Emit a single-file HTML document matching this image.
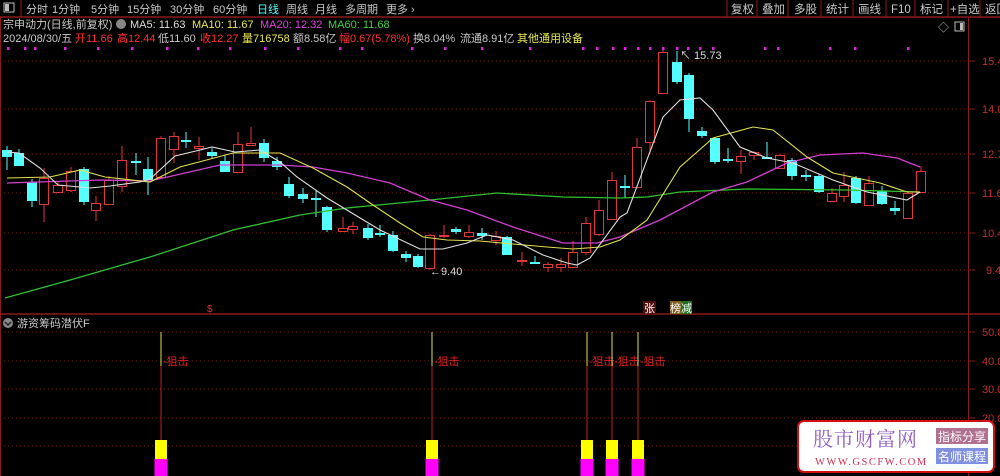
<!DOCTYPE html>
<html><head><meta charset="utf-8"><style>
body{margin:0;background:#000;width:1000px;height:476px;overflow:hidden;font-family:"Liberation Sans","Noto Sans CJK SC",sans-serif;}
svg{position:absolute;left:0;top:0}
.t{font-family:"Liberation Sans","Noto Sans CJK SC",sans-serif;}
</style></head><body>
<svg width="1000" height="476" viewBox="0 0 1000 476" class="t">
<rect x="0" y="0" width="1000" height="17" fill="#000"/>
<line x1="0" y1="17" x2="1000" y2="17" stroke="#8b1a1a" stroke-width="1.5"/>
<rect x="4" y="3" width="10" height="9" fill="none" stroke="#bbb"/><rect x="5" y="4" width="4" height="7" fill="#bbb"/>
<line x1="21" y1="0" x2="21" y2="17" stroke="#8b1a1a"/>
<g font-size="11" fill="#c8c8c8">
<text x="26" y="13">分时</text><text x="52" y="13">1分钟</text><text x="91" y="13">5分钟</text><text x="127" y="13">15分钟</text><text x="170" y="13">30分钟</text><text x="213" y="13">60分钟</text>
<text x="257" y="13" fill="#5ff">日线</text><text x="286" y="13">周线</text><text x="315" y="13">月线</text><text x="345" y="13">多周期</text><text x="386" y="13">更多 ›</text>
</g>
<g stroke="#8b1a1a" fill="none"><line x1="727" y1="0" x2="727" y2="17"/><line x1="757" y1="0" x2="757" y2="17"/><line x1="788" y1="0" x2="788" y2="17"/><line x1="821" y1="0" x2="821" y2="17"/><line x1="853" y1="0" x2="853" y2="17"/><line x1="886" y1="0" x2="886" y2="17"/><line x1="915" y1="0" x2="915" y2="17"/><line x1="948" y1="0" x2="948" y2="17"/><line x1="980" y1="0" x2="980" y2="17"/></g>
<g font-size="11.5" fill="#c8c8c8"><text x="731" y="13">复权</text><text x="762" y="13">叠加</text><text x="794" y="13">多股</text><text x="826" y="13">统计</text><text x="858" y="13">画线</text><text x="891" y="13">F10</text><text x="920" y="13">标记</text><text x="950" y="13">+自选</text><text x="985" y="13">返回</text></g>
<g font-size="11">
<text x="3" y="28" fill="#c8c8c8">宗申动力(日线,前复权)</text>
<circle cx="121" cy="24" r="5" fill="#888"/>
<text x="130" y="28" fill="#ddd">MA5: 11.63</text><text x="192" y="28" fill="#e8e850">MA10: 11.67</text><text x="260" y="28" fill="#e040e0">MA20: 12.32</text><text x="328" y="28" fill="#40d040">MA60: 11.68</text>
<text x="3" y="42" fill="#c8c8c8">2024/08/30/五</text><text x="75" y="42" fill="#ff3030">开11.66</text><text x="117" y="42" fill="#ff3030">高12.44</text><text x="158" y="42" fill="#c8c8c8">低11.60</text><text x="200" y="42" fill="#ff3030">收12.27</text><text x="242" y="42" fill="#e8e850">量716758</text><text x="293" y="42" fill="#c8c8c8">额8.58亿</text><text x="339" y="42" fill="#ff3030">幅0.67(5.78%)</text><text x="413" y="42" fill="#c8c8c8">换8.04%</text><text x="460" y="42" fill="#c8c8c8">流通8.91亿</text><text x="517" y="42" fill="#e8e850">其他通用设备</text>
</g>
<text x="938" y="31" fill="#bbb" font-size="11">◇</text><rect x="955" y="22" width="9" height="9" fill="none" stroke="#bbb"/><rect x="960" y="23" width="3" height="7" fill="#bbb"/>
<line x1="0.5" y1="17" x2="0.5" y2="476" stroke="#8b1a1a"/>
<line x1="968.5" y1="17" x2="968.5" y2="476" stroke="#8b1a1a"/>
<line x1="0" y1="314" x2="1000" y2="314" stroke="#8b1a1a" stroke-width="1.5"/>
<g stroke="#7a1818" stroke-dasharray="1,3"><line x1="0" y1="61" x2="968" y2="61"/><line x1="0" y1="109" x2="968" y2="109"/><line x1="0" y1="154" x2="968" y2="154"/><line x1="0" y1="193" x2="968" y2="193"/><line x1="0" y1="233" x2="968" y2="233"/><line x1="0" y1="270" x2="968" y2="270"/>
<line x1="0" y1="332" x2="968" y2="332"/><line x1="0" y1="361" x2="968" y2="361"/><line x1="0" y1="389" x2="968" y2="389"/><line x1="0" y1="418" x2="968" y2="418"/><line x1="0" y1="446" x2="968" y2="446"/></g>
<g stroke="#8b1a1a"><line x1="968" y1="61" x2="975" y2="61"/><line x1="968" y1="109" x2="975" y2="109"/><line x1="968" y1="154" x2="975" y2="154"/><line x1="968" y1="193" x2="975" y2="193"/><line x1="968" y1="233" x2="975" y2="233"/><line x1="968" y1="270" x2="975" y2="270"/><line x1="968" y1="332" x2="975" y2="332"/><line x1="968" y1="361" x2="975" y2="361"/><line x1="968" y1="389" x2="975" y2="389"/><line x1="968" y1="418" x2="975" y2="418"/><line x1="968" y1="446" x2="975" y2="446"/></g>
<g font-size="11" fill="#c03030"><text x="982" y="65">15.4</text><text x="982" y="113">14.0</text><text x="982" y="158">12.7</text><text x="982" y="197">11.6</text><text x="982" y="237">10.4</text><text x="986" y="274">9.4</text>
<text x="982" y="336">50.0</text><text x="982" y="365">40.0</text><text x="982" y="393">30.0</text><text x="982" y="422">20.0</text></g>
<g fill="#e020e0" id="dots"></g>
<g id="candles"></g>
<polyline fill="none" stroke="#30c030" stroke-width="1.3" points="5,298 70,280 150,257 233,230 300,215 347,208 430,200 497,193 563,197 620,198 647,197 680,192 747,189 847,190 920,192"/>
<polyline fill="none" stroke="#d040d0" stroke-width="1.3" points="7,183 100,180 150,181 220,165 260,165 280,165 313,167 347,173 390,183 430,200 467,210 513,227 563,243 597,243 620,237 660,220 713,192 747,182 787,163 820,155 863,153 897,158 920,167"/>
<polyline fill="none" stroke="#e0e050" stroke-width="1.1" points="7,178 50,177 80,170 105,177 150,182 180,167 233,153 280,153 313,168 347,187 373,205 400,223 423,237 447,240 480,241 513,244 547,247 573,249 600,247 620,240 647,220 680,167 713,138 753,127 773,130 807,157 833,173 880,183 907,192 920,192"/>
<polyline fill="none" stroke="#e0e0e0" stroke-width="1.1" points="7,152 19,153 40,168 58,185 90,188 110,186 140,182 150,179 175,156 200,150 212,147 235,152 260,150 280,162 297,177 327,198 380,230 420,249 443,249 467,243 487,235 513,240 543,255 567,263 577,265 590,258 620,217 627,213 663,117 680,100 700,98 713,110 740,147 767,158 793,163 833,180 867,192 907,200 920,192"/>
<text x="680" y="59" font-size="11" fill="#ddd">↖ 15.73</text>
<text x="430" y="275" font-size="11" fill="#ddd">←9.40</text>
<text x="207" y="312" font-size="10" fill="#e03030">$</text>
<rect x="643" y="301" width="13" height="13" fill="#501010"/><text x="644" y="312" font-size="11" fill="#fff">张</text>
<rect x="670" y="301" width="11" height="13" fill="#806020"/><rect x="681" y="301" width="11" height="13" fill="#207020"/><text x="670" y="312" font-size="11" fill="#fff">榜减</text>
<circle cx="8" cy="323" r="5" fill="#888"/><path d="M5,322 L8,325 L11,322" stroke="#222" fill="none" stroke-width="1.5"/>
<text x="17" y="327" font-size="11" fill="#c8c8c8">游资筹码潜伏F</text>
<g id="sig"></g>
<rect x="798" y="421" width="196" height="51" rx="6" fill="#fff" stroke="#d01010" stroke-width="2"/>
<text x="813" y="446" font-size="20" fill="#9060c0" font-family="'Noto Serif CJK SC',serif" letter-spacing="1">股市财富网</text>
<text x="815" y="465" font-size="10.5" fill="#d03050" font-family="'Liberation Serif',serif" letter-spacing="1.5">WWW.GSCFW.COM</text>
<rect x="936" y="428" width="52" height="16" fill="#b07090"/><text x="938" y="441" font-size="12" fill="#fff">指标分享</text>
<rect x="936" y="448" width="52" height="16" fill="#8090e0"/><text x="938" y="461" font-size="12" fill="#fff">名师课程</text>
</svg>
<script>
var NS="http://www.w3.org/2000/svg";
function el(p,t,a){var e=document.createElementNS(NS,t);for(var k in a)e.setAttribute(k,a[k]);p.appendChild(e);return e;}
var d=document.getElementById('dots');
[8,25,35,65,98,132,167,198,230,265,298,340,362,412,445,482,530,583,597,613,625,638,650,663,677,688,700,713,765,778,830,855,908].forEach(function(x){el(d,'rect',{x:x-1,y:47,width:2.5,height:3});});
var C=[[7,150,157,146,170,'c'],[19,153,166,149,166,'c'],[32,182,201,179,207,'c'],[44,178,204,168,222,'r'],[58,185,192,182,193,'r'],[71,171,190,167,192,'r'],[84,169,202,167,205,'c'],[96,203,210,196,221,'r'],[109,180,204,176,205,'r'],[122,160,186,146,192,'r'],[136,161,163,153,175,'c'],[148,169,180,157,195,'c'],[161,138,177,136,178,'r'],[174,136,149,132,163,'r'],[186,140,141,132,148,'c'],[199,146,148,137,160,'r'],[212,152,156,148,158,'c'],[225,161,172,155,172,'c'],[238,144,172,132,173,'r'],[251,143,145,127,146,'r'],[264,143,158,139,162,'c'],[277,161,167,157,170,'c'],[289,184,196,177,198,'c'],[303,194,199,188,203,'c'],[316,198,199,191,217,'c'],[327,207,230,206,232,'c'],[343,228,231,217,232,'r'],[353,226,229,222,234,'r'],[368,228,238,224,240,'c'],[380,233,234,225,237,'c'],[393,235,251,231,252,'c'],[406,254,258,251,262,'c'],[418,256,267,254,268,'c'],[430,235,268,234,270,'r'],[444,235,236,225,238,'r'],[456,229,232,227,234,'c'],[469,232,236,225,238,'r'],[482,233,236,228,240,'c'],[496,236,240,231,245,'r'],[507,237,255,236,255,'c'],[522,260,261,252,266,'r'],[535,262,264,256,264,'c'],[548,264,267,262,272,'r'],[561,264,267,258,272,'r'],[573,252,267,241,268,'r'],[586,223,252,217,255,'r'],[599,210,234,200,236,'r'],[612,180,219,172,220,'r'],[625,186,188,175,198,'c'],[637,147,187,138,188,'r'],[650,101,142,100,154,'r'],[663,52,93,50,94,'r'],[677,62,82,51,84,'c'],[689,75,119,73,132,'c'],[702,131,136,127,138,'c'],[715,138,162,137,164,'c'],[728,159,160,148,163,'c'],[741,156,161,150,174,'r'],[754,152,155,151,160,'r'],[767,157,158,142,159,'c'],[780,155,168,154,169,'r'],[792,160,176,158,180,'c'],[806,175,177,170,181,'c'],[819,176,192,174,193,'c'],[832,193,201,188,201,'r'],[844,185,196,172,202,'r'],[856,178,203,176,204,'c'],[869,183,205,176,205,'r'],[882,191,204,186,205,'c'],[895,208,211,201,215,'c'],[908,193,218,192,218,'r'],[921,171,192,166,192,'r']];
var g=document.getElementById('candles');
C.forEach(function(c){var x=c[0],col=c[5]=='r'?'#e03838':'#55ffff';
el(g,'line',{x1:x,y1:c[3],x2:x,y2:c[4],stroke:col});
var h=Math.max(c[2]-c[1],1);
if(c[5]=='r'){el(g,'rect',{x:x-4.5,y:c[1]+0.5,width:9,height:h,fill:'#000',stroke:col});}
else{el(g,'rect',{x:x-5,y:c[1],width:10,height:h+(h<2?1:0),fill:col});}
});
var s=document.getElementById('sig');
[161,432,587,612,638].forEach(function(x){
el(s,'line',{x1:x,y1:332,x2:x,y2:366,stroke:'#e0e040'});
el(s,'line',{x1:x,y1:366,x2:x,y2:440,stroke:'#c02020'});
el(s,'rect',{x:x-6,y:440,width:12,height:19,fill:'#ffff00'});
el(s,'rect',{x:x-6.5,y:459,width:13,height:17,fill:'#ff00ff'});
var t=el(s,'text',{x:x+2,y:365,'font-size':11,fill:'#e02020'});t.textContent='-狙击';
});
</script>
</body></html>
